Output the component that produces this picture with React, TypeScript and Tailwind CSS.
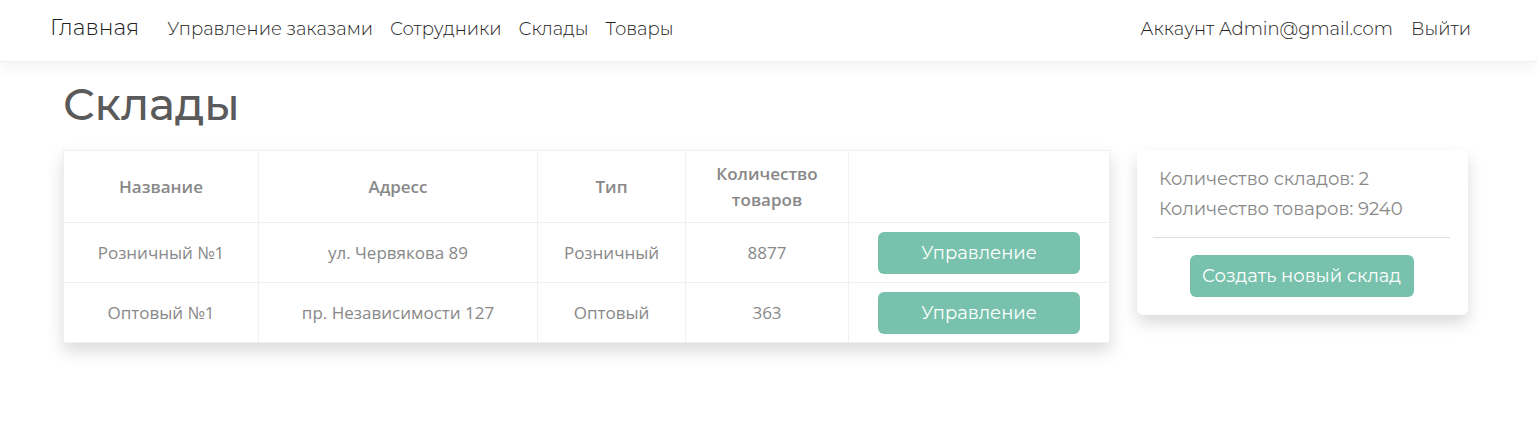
const rows = [
  { name: 'Розничный №1', address: 'ул. Червякова 89', type: 'Розничный', count: 8877 },
  { name: 'Оптовый №1', address: 'пр. Независимости 127', type: 'Оптовый', count: 363 },
]

const links = ['Управление заказами', 'Сотрудники', 'Склады', 'Товары']

export default function App() {
  return (
    <div className="font-['Montserrat','Inter',sans-serif] text-[#888888]">
      <header className="flex h-[62px] items-center justify-between border-b border-[#eeeeee] pr-[66px] pb-1 pl-[50px] text-lg font-light text-[#222222] shadow-[0_4px_16px_rgba(0,0,0,0.06)]">
        <nav className="flex items-center whitespace-nowrap">
          <a href="#" className="mr-7 text-[22px]">Главная</a>
          <div className="flex gap-[17px]">
            {links.map((l) => (
              <a key={l} href="#">{l}</a>
            ))}
          </div>
        </nav>
        <div className="flex gap-[18px] whitespace-nowrap">
          <a href="#">Аккаунт Admin@gmail.com</a>
          <a href="#">Выйти</a>
        </div>
      </header>
      <main className="pr-[69px] pb-10 pl-[63px]">
        <h1 className="mb-[18px] pt-[14px] text-[44px] leading-[56px] font-medium text-[#5a5a5a]">Склады</h1>
        <div className="flex items-start gap-[27px]">
          <div className="min-w-0 flex-1 shadow-[0_8px_16px_rgba(0,0,0,0.15)]">
            <table className="w-full table-fixed border-collapse text-center font-['Open_Sans',sans-serif] text-[17px] leading-[26px]">
              <thead>
                <tr className="h-[72px] *:border *:border-[#f0f0f0] *:font-semibold">
                  <th className="w-[195px]">Название</th>
                  <th className="w-[279px]">Адресс</th>
                  <th className="w-[148px]">Тип</th>
                  <th className="w-[163px] px-5">Количество товаров</th>
                  <th></th>
                </tr>
              </thead>
              <tbody>
                {rows.map((r) => (
                  <tr key={r.name} className="h-[60px] *:border *:border-[#f0f0f0]">
                    <td>{r.name}</td>
                    <td>{r.address}</td>
                    <td>{r.type}</td>
                    <td>{r.count}</td>
                    <td className="px-[29px]">
                      <button className="block h-[42px] w-full rounded-md bg-[#78c2ad] font-['Montserrat','Inter',sans-serif] text-lg leading-6 font-normal text-white">Управление</button>
                    </td>
                  </tr>
                ))}
              </tbody>
            </table>
          </div>
          <aside className="w-[331px] shrink-0 rounded-md pt-[14px] pr-[18px] pb-[18px] pl-4 text-lg leading-[30px] shadow-[0_8px_16px_rgba(0,0,0,0.15)]">
            <p className="px-1.5">Количество складов: 2</p>
            <p className="px-1.5">Количество товаров: 9240</p>
            <hr className="mt-[13px] mb-[17px] border-[#dddddd]" />
            <button className="mx-auto block h-[42px] w-56 rounded-md bg-[#78c2ad] text-lg leading-6 font-normal whitespace-nowrap text-white">Создать новый склад</button>
          </aside>
        </div>
      </main>
    </div>
  )
}
